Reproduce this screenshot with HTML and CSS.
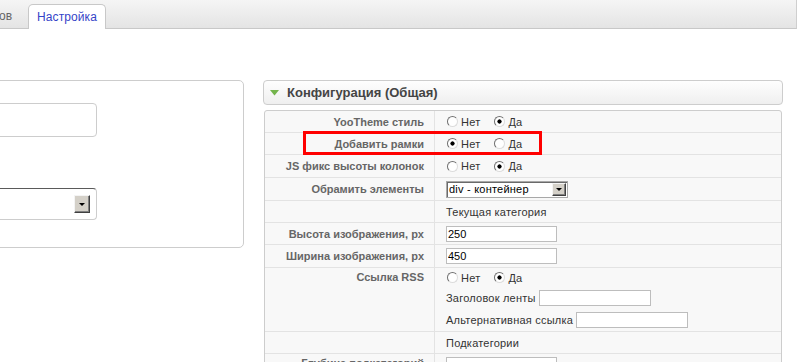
FILE: index.html
```html
<!DOCTYPE html>
<html lang="ru">
<head>
<meta charset="utf-8">
<title>Настройка</title>
<link rel="stylesheet" href="styles.css">
</head>
<body>
<div class="tabbar">
  <span class="tab tab-prev">ов</span>
  <span class="tab tab-active">Настройка</span>
</div>
<div class="main">
  <div class="leftpanel">
    <div class="lp-input"></div>
    <div class="lp-select"><span class="wbtn wbtn-big"><span class="arrow"></span></span></div>
  </div>
  <div class="rightcol">
    <div class="cfg-head">
      <svg class="tri" width="9" height="6" viewBox="0 0 9 6"><polygon points="0,0 9,0 4.5,5.5" fill="#74b44c"/></svg>
      <span>Конфигурация (Общая)</span>
    </div>
    <div class="params">
      <div class="row h22">
        <div class="key">YooTheme стиль</div>
        <div class="val"><div class="radios">
          <label class="opt"><input class="rb" type="radio" name="r1">Нет</label>
          <label class="opt"><input class="rb" type="radio" name="r1" checked>Да</label>
        </div></div>
      </div>
      <div class="row h22">
        <div class="key">Добавить рамки</div>
        <div class="val"><div class="radios">
          <label class="opt"><input class="rb" type="radio" name="r2" checked>Нет</label>
          <label class="opt"><input class="rb" type="radio" name="r2">Да</label>
        </div></div>
        <div class="mark"></div>
      </div>
      <div class="row h23">
        <div class="key">JS фикс высоты колонок</div>
        <div class="val"><div class="radios">
          <label class="opt"><input class="rb" type="radio" name="r3">Нет</label>
          <label class="opt"><input class="rb" type="radio" name="r3" checked>Да</label>
        </div></div>
      </div>
      <div class="row h23">
        <div class="key">Обрамить элементы</div>
        <div class="val"><div class="sel"><span class="sel-text">div - контейнер</span><span class="wbtn"><span class="arrow"></span></span></div></div>
      </div>
      <div class="row h22">
        <div class="key"></div>
        <div class="val"><span>Текущая категория</span></div>
      </div>
      <div class="row h22">
        <div class="key">Высота изображения, px</div>
        <div class="val"><input class="txt" type="text" value="250"></div>
      </div>
      <div class="row h23">
        <div class="key">Ширина изображения, px</div>
        <div class="val"><input class="txt" type="text" value="450"></div>
      </div>
      <div class="row h64">
        <div class="key key-top">Ссылка RSS</div>
        <div class="val val-top">
          <div class="line l19"><div class="radios">
            <label class="opt"><input class="rb" type="radio" name="r4">Нет</label>
            <label class="opt"><input class="rb" type="radio" name="r4" checked>Да</label>
          </div></div>
          <div class="line">Заголовок ленты<input class="txt txt-inline" type="text" value=""></div>
          <div class="line">Альтернативная ссылка<input class="txt txt-inline" type="text" value=""></div>
        </div>
      </div>
      <div class="row h22">
        <div class="key"></div>
        <div class="val"><span>Подкатегории</span></div>
      </div>
      <div class="row h30">
        <div class="key key-last">Глубина подкатегорий</div>
        <div class="val val-last"><input class="txt" type="text" value=""></div>
      </div>
    </div>
  </div>
</div>
</body>
</html>
```
FILE: styles.css
```css
* { box-sizing: border-box; }
html, body { margin: 0; padding: 0; overflow: hidden; background: #fff; }
body {
  font-family: "Liberation Sans", Arial, sans-serif;
  font-size: 11px;
  color: #333;
  width: 797px;
  height: 362px;
}

/* tabs */
.tabbar {
  height: 29px;
  display: flex;
  align-items: flex-end;
  background: linear-gradient(#f5f5f5, #e4e4e4);
  border-bottom: 1px solid #c8c8c8;
  border-right: 1px solid #cfcfcf;
}
.tab { font-size: 12px; line-height: 16px; padding-top: 4px; padding-bottom: 4px; }
.tab-prev { color: #666; margin-left: -1px; width: 29px; flex: none; }
.tab-active {
  background: #fff;
  border: 1px solid #c8c8c8;
  border-bottom: none;
  border-radius: 5px 5px 0 0;
  padding: 4px 8px;
  margin-bottom: -1px;
  height: 25px;
  color: #3544c8;
  letter-spacing: 0.1px;
}

/* layout */
.main { display: flex; align-items: flex-start; padding-top: 51px; gap: 19px; }

/* left panel */
.leftpanel {
  margin-left: -100px;
  width: 344px;
  height: 168px;
  flex: none;
  border: 1px solid #cdcdcd;
  border-radius: 5px;
  padding: 22px 146px 0 0;
  display: flex;
  flex-direction: column;
}
.lp-input {
  height: 34px;
  border: 1px solid #cdcdcd;
  border-radius: 0 4px 4px 0;
}
.lp-select {
  margin-top: 51px;
  height: 32px;
  border: 1px solid #cdcdcd;
  border-top-color: #5a5a5a;
  border-radius: 0 4px 4px 0;
  display: flex;
  align-items: center;
  justify-content: flex-end;
  padding-right: 6px;
}

/* windows-style button */
.wbtn {
  width: 14px;
  height: 14px;
  background: #d4d0c8;
  border: 1px solid;
  border-color: #f4f4f4 #404040 #404040 #f4f4f4;
  box-shadow: inset -1px -1px 0 #808080;
  display: flex;
  align-items: center;
  justify-content: center;
  flex: none;
}
.wbtn-big { width: 16px; height: 18px; }
.arrow {
  width: 0; height: 0;
  border-left: 3px solid transparent;
  border-right: 3px solid transparent;
  border-top: 3px solid #000;
}

/* right column */
.rightcol { width: 520px; flex: none; }
.cfg-head {
  height: 25px;
  border: 1px solid #cdcdcd;
  border-radius: 4px;
  background: linear-gradient(#fefefe, #efefef);
  display: flex;
  align-items: center;
  padding-left: 6px;
  gap: 8px;
  font-size: 13px;
  font-weight: bold;
  color: #444;
}
.tri { flex: none; margin-top: 1px; }

.params {
  margin: 5px 1px 0;
  border: 1px solid #cdcdcd;
  border-radius: 3px 3px 0 0;
  background: #f8f8f8;
}
.row {
  display: flex;
  border-bottom: 1px solid #e3e3e3;
  position: relative;
}
.h22 { height: 22px; }
.h23 { height: 23px; }
.h64 { height: 64px; }
.h30 { height: 30px; }

.key {
  width: 170px;
  flex: none;
  border-right: 1px solid #e3e3e3;
  padding-right: 10px;
  font-weight: bold;
  color: #666;
  display: flex;
  align-items: center;
  justify-content: flex-end;
  white-space: nowrap;
}
.key-top { align-items: flex-start; line-height: 19px; }
.key-last { align-items: flex-start; padding-top: 3px; line-height: 13px; }

.val {
  flex: 1;
  padding-left: 11px;
  display: flex;
  flex-direction: column;
  justify-content: center;
  align-items: flex-start;
  color: #333;
  letter-spacing: 0.22px;
}
.val-top { justify-content: flex-start; }
.val-last { justify-content: flex-start; padding-top: 3px; }

.line { height: 22px; display: flex; align-items: center; white-space: nowrap; }
.l19 { height: 19px; }

.radios { display: flex; align-items: center; gap: 13px; }
.opt { display: flex; align-items: center; gap: 3px; }
.rb {
  -webkit-appearance: none;
  appearance: none;
  margin: 0 0 0 1px;
  width: 11px;
  height: 11px;
  border-radius: 50%;
  border: 1px solid;
  border-color: #707070 #dcdcdc #dcdcdc #707070;
  background: #fff;
  flex: none;
}
.rb:checked { background: radial-gradient(circle, #000 0 1.8px, #fff 2.4px); }

.txt {
  width: 111px;
  height: 16px;
  margin: 0;
  border: 1px solid #bdbdbd;
  background: #fff;
  padding: 0 1px;
  font-family: "Liberation Sans", Arial, sans-serif;
  font-size: 11px;
  color: #000;
  outline: none;
}
.txt-inline { margin-left: 3px; width: 112px; }

.sel {
  width: 122px;
  height: 17px;
  border: 1px solid #a8a8a8;
  box-shadow: inset 1px 1px 0 #6a6a6a;
  background: #fff;
  display: flex;
  align-items: center;
  padding: 0 1px 0 2px;
  color: #000;
}
.sel-text { flex: 1; white-space: nowrap; }
.sel .wbtn { height: 13px; width: 14px; }

/* red annotation frame */
.mark {
  position: absolute;
  left: 38px;
  top: -2px;
  width: 239px;
  height: 24px;
  border: 3px solid #ff0000;
}
```
